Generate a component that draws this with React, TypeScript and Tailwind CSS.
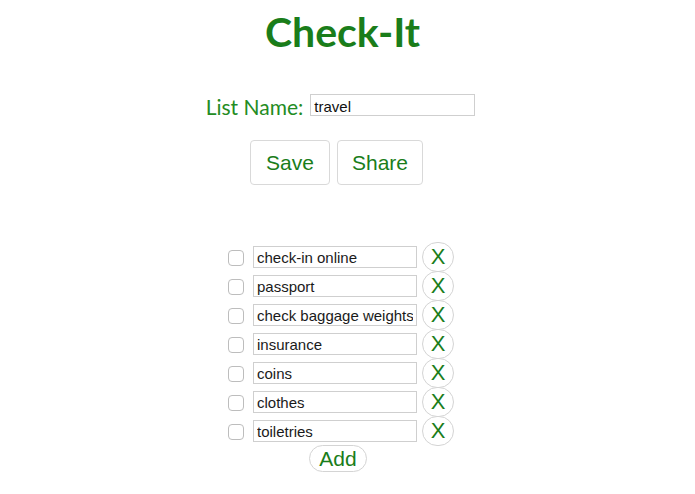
import React from "react";

const items = [
  "check-in online",
  "passport",
  "check baggage weights",
  "insurance",
  "coins",
  "clothes",
  "toiletries",
];

export default function App() {
  return (
    <div className="min-h-screen bg-white pr-[14px] flex flex-col items-center">
      <h1
        className="mt-[8px] ml-[4px] text-[41px] font-bold leading-[47px] text-[#1a7d1a]"
        style={{ fontFamily: "Lato, 'Open Sans', sans-serif" }}
      >
        Check-It
      </h1>

      <div className="mt-[39px] flex items-start h-[22px] gap-[7px]">
        <label
          className="mt-[2px] text-[21px] leading-[22px] text-[#238c23]"
          style={{ fontFamily: "Lato, 'Open Sans', sans-serif" }}
        >
          List Name:
        </label>
        <input
          readOnly
          value="travel"
          className="w-[165px] h-[22px] border border-[#cfcfcf] px-[3px] pt-[4px] pb-0 text-[15px] text-[#111] outline-none"
          style={{ fontFamily: "'Liberation Sans', Arial, sans-serif" }}
        />
      </div>

      <div
        className="mt-[24px] mr-[8px] flex gap-[7px]"
        style={{ fontFamily: "'Liberation Sans', Arial, sans-serif" }}
      >
        <button className="w-[80px] h-[45px] rounded-[4px] border border-[#d9d9d9] bg-white text-[21px] text-[#1a7d1a]">
          Save
        </button>
        <button className="w-[86px] h-[45px] rounded-[4px] border border-[#d9d9d9] bg-white text-[21px] text-[#1a7d1a]">
          Share
        </button>
      </div>

      <div
        className="mt-[57px] ml-[1px] flex flex-col"
        style={{ fontFamily: "'Liberation Sans', Arial, sans-serif" }}
      >
        {items.map((it) => (
          <div key={it} className="h-[29px] flex items-center">
            <span className="mt-[2px] w-[16px] h-[16px] rounded-[4px] border border-[#bdbdbd] bg-white" />
            <input
              readOnly
              value={it}
              className="ml-[9px] w-[164px] h-[22px] border border-[#cfcfcf] px-[3px] pt-[4px] pb-0 text-[15px] text-[#1a1a1a] outline-none"
            />
            <button className="ml-[5px] w-[32px] h-[30px] rounded-full border border-[#d4d4d4] bg-white text-[22px] leading-none text-[#1a7d1a] flex items-center justify-center">
              X
            </button>
          </div>
        ))}
      </div>

      <button
        className="mr-[5px] w-[58px] h-[27px] rounded-full border border-[#d4d4d4] bg-white text-[21px] leading-none text-[#1a7d1a] flex items-center justify-center"
        style={{ fontFamily: "'Liberation Sans', Arial, sans-serif" }}
      >
        Add
      </button>
    </div>
  );
}
